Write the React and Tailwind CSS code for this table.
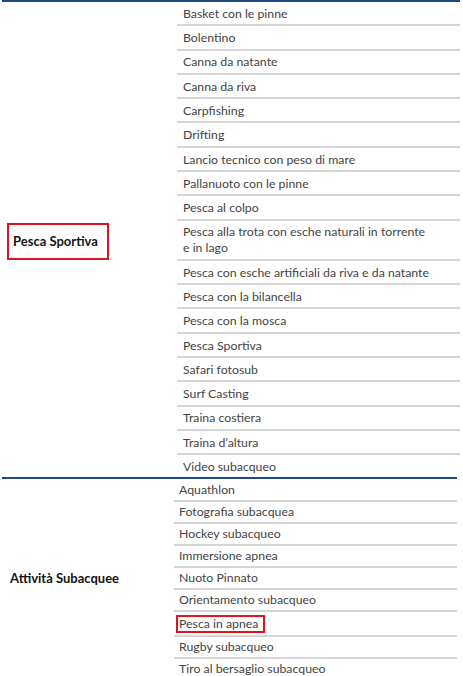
import React from 'react';

const sportiva = [
    'Basket con le pinne',
    'Bolentino',
    'Canna da natante',
    'Canna da riva',
    'Carpfishing',
    'Drifting',
    'Lancio tecnico con peso di mare',
    'Pallanuoto con le pinne',
    'Pesca al colpo',
    ['Pesca alla trota con esche naturali in torrente', 'e in lago'],
    'Pesca con esche artificiali da riva e da natante',
    'Pesca con la bilancella',
    'Pesca con la mosca',
    'Pesca Sportiva',
    'Safari fotosub',
    'Surf Casting',
    'Traina costiera',
    'Traina d\u2019altura',
    'Video subacqueo',
];

const subacquee = [
    'Aquathlon',
    'Fotografia subacquea',
    'Hockey subacqueo',
    'Immersione apnea',
    'Nuoto Pinnato',
    'Orientamento subacqueo',
    'Pesca in apnea',
    'Rugby subacqueo',
    'Tiro al bersaglio subacqueo',
];

const App = () => {
    return (
        <div className="w-[463px] h-[676px] overflow-hidden bg-white text-[12.3px] text-[#444444] font-['Lato',sans-serif]">
            {/* Pesca Sportiva */}
            <section className="ml-[2px] w-[458px] border-t-2 border-[#1f4a86] flex">
                <div className="w-[175px] shrink-0 flex items-center pl-[5px] pt-[3px]">
                    <span className="inline-block border-2 border-[#e3141c] pl-[4px] pr-[9px] py-[9px] text-[13px] font-bold text-[#141414] leading-[15px]">
                        Pesca Sportiva
                    </span>
                </div>
                <div className="flex-1">
                    {sportiva.map((item, i) => (
                        <div
                            key={i}
                            className={`pl-[6px] pt-[3.9px] pb-[2.4px] leading-[16px] ${i < sportiva.length - 1 ? 'border-b-2 border-[#d6d6d6]' : ''}`}
                        >
                            {Array.isArray(item) ? (
                                <>
                                    {item[0]}
                                    <br />
                                    {item[1]}
                                </>
                            ) : (
                                item
                            )}
                        </div>
                    ))}
                </div>
            </section>

            {/* Attività Subacquee */}
            <section className="ml-[2px] w-[455px] border-t-2 border-[#1f4a86] flex">
                <div className="w-[172px] shrink-0 flex items-center pl-[8px] text-[13px] font-bold text-[#141414]">
                    Attività Subacquee
                </div>
                <div className="flex-1">
                    {subacquee.map((item, i) => (
                        <div
                            key={item}
                            className={`pl-[5px] pt-[2.2px] pb-[2px] leading-[16px] ${i < subacquee.length - 1 ? 'border-b-2 border-[#d6d6d6]' : ''}`}
                        >
                            {item === 'Pesca in apnea' ? (
                                <span className="inline-block -ml-[3px] pl-[1px] pr-[5px] border-2 border-[#e3141c] leading-[14px]">{item}</span>
                            ) : (
                                item
                            )}
                        </div>
                    ))}
                </div>
            </section>
        </div>
    );
};

export default App;
